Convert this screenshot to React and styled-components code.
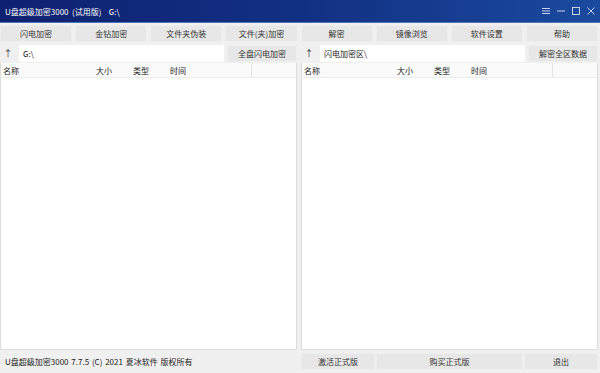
import React from 'react';
import styled, { createGlobalStyle } from 'styled-components';

const GlobalStyle = createGlobalStyle`
  html, body {
    margin: 0;
    padding: 0;
    background: #f0f0f0;
  }
  body {
    font-family: "Noto Sans CJK SC", "Liberation Sans", sans-serif;
    font-size: 8px;
    color: #222;
  }
`;

const Window = styled.div`
  width: 600px;
  height: 373px;
  display: flex;
  flex-direction: column;
  background: #f0f0f0;
  overflow: hidden;
`;

const TitleBar = styled.div`
  height: 22px;
  flex-shrink: 0;
  display: flex;
  align-items: center;
  justify-content: space-between;
  padding: 0 4px 0 5px;
  background: linear-gradient(90deg, #0e2170 0%, #123083 50%, #1a4a9e 100%);
  border-bottom: 1px solid #4f74b8;
  color: #fff;
`;

const TitleText = styled.span`
  font-size: 8px;
  white-space: pre;
`;

const Controls = styled.div`
  display: flex;
  align-items: center;
  gap: 5px;
`;

const ControlIcon = styled.svg`
  width: 10px;
  height: 10px;
  stroke: #d8e0f0;
  fill: none;
  stroke-width: 0.9;
`;

const Toolbar = styled.div`
  display: grid;
  grid-template-columns: repeat(8, 1fr);
  gap: 3px;
  padding: 2px 2px 0 0;
`;

const Button = styled.div`
  height: 17px;
  display: flex;
  align-items: center;
  justify-content: center;
  background: #e7e7e7;
  border: 1px solid #eeeeee;
  box-sizing: border-box;
  font-size: 8px;
  color: #333;
  white-space: nowrap;
`;

const Panels = styled.div`
  flex: 1;
  display: grid;
  grid-template-columns: 1fr 1fr;
  gap: 4px;
  padding: 3px 2px 0 0;
  min-height: 0;
`;

const Panel = styled.div`
  display: flex;
  flex-direction: column;
  min-height: 0;
`;

const PathRow = styled.div`
  display: flex;
  align-items: center;
  height: 17px;
  gap: 3px;
`;

const UpArrow = styled.span`
  width: 16px;
  text-align: center;
  font-size: 9px;
  color: #333;
`;

const PathInput = styled.div`
  flex: 1;
  height: 17px;
  display: flex;
  align-items: center;
  padding-left: 4px;
  background: #fff;
  font-size: 8px;
`;

const PathButton = styled(Button)`
  width: 70px;
  flex-shrink: 0;
`;

const List = styled.div`
  flex: 1;
  margin-top: 1px;
  display: flex;
  flex-direction: column;
  background: #fff;
  border: 1px solid #dcdcdc;
  border-top: none;
`;

const ListHeader = styled.div`
  height: 14px;
  display: grid;
  grid-template-columns: 93px 37px 37px 84px 1fr;
  align-items: center;
  background: #fafafa;
  border-bottom: 1px solid #ececec;
`;

const HeaderCell = styled.span`
  padding-left: 2px;
  height: 100%;
  display: flex;
  align-items: center;
  border-right: ${(p) => (p.$line ? '1px solid #e4e4e4' : 'none')};
  font-size: 8px;
`;

const StatusBar = styled.div`
  height: 23px;
  flex-shrink: 0;
  display: grid;
  grid-template-columns: 1fr 1fr;
  gap: 4px;
  padding: 0 2px 0 0;
  align-items: center;
`;

const StatusText = styled.span`
  padding-left: 5px;
  font-size: 8px;
  word-spacing: 1px;
`;

const StatusButtons = styled.div`
  display: grid;
  grid-template-columns: 74px 1fr 74px;
  gap: 1px;
`;

const columns = ['名称', '大小', '类型', '时间', ''];

function FilePanel({ path, action }) {
  return (
    <Panel>
      <PathRow>
        <UpArrow>↑</UpArrow>
        <PathInput>{path}</PathInput>
        <PathButton>{action}</PathButton>
      </PathRow>
      <List>
        <ListHeader>
          {columns.map((c, i) => (
            <HeaderCell key={i} $line={i === 3}>{c}</HeaderCell>
          ))}
        </ListHeader>
      </List>
    </Panel>
  );
}

export default function App() {
  const tools = ['闪电加密', '金钻加密', '文件夹伪装', '文件(夹)加密', '解密', '镜像浏览', '软件设置', '帮助'];
  return (
    <Window>
      <GlobalStyle />
      <TitleBar>
        <TitleText>U盘超级加密3000  (试用版)    G:\</TitleText>
        <Controls>
          <ControlIcon viewBox="0 0 10 10">
            <path d="M1 2.5h8M1 5h8M1 7.5h8" />
          </ControlIcon>
          <ControlIcon viewBox="0 0 10 10">
            <path d="M1 5h8" />
          </ControlIcon>
          <ControlIcon viewBox="0 0 10 10">
            <rect x="1.5" y="1.5" width="7" height="7" />
          </ControlIcon>
          <ControlIcon viewBox="0 0 10 10">
            <path d="M1.5 1.5l7 7M8.5 1.5l-7 7" />
          </ControlIcon>
        </Controls>
      </TitleBar>
      <Toolbar>
        {tools.map((t) => (
          <Button key={t}>{t}</Button>
        ))}
      </Toolbar>
      <Panels>
        <FilePanel path="G:\" action="全盘闪电加密" />
        <FilePanel path="闪电加密区\" action="解密全区数据" />
      </Panels>
      <StatusBar>
        <StatusText>U盘超级加密3000 7.7.5 (C) 2021 夏冰软件 版权所有</StatusText>
        <StatusButtons>
          <Button>激活正式版</Button>
          <Button>购买正式版</Button>
          <Button>退出</Button>
        </StatusButtons>
      </StatusBar>
    </Window>
  );
}
